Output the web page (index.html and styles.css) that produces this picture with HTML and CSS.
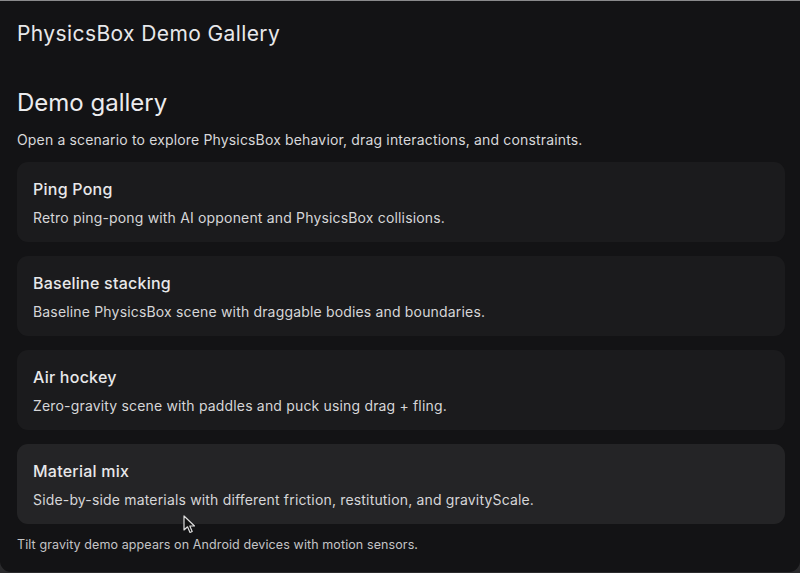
FILE: index.html
```html
<!DOCTYPE html>
<html>
<head>
<meta charset="utf-8">
<link rel="stylesheet" href="styles.css">
</head>
<body>
<div class="window">
  <header class="appbar">PhysicsBox Demo Gallery</header>
  <main class="content">
    <h1 class="heading">Demo gallery</h1>
    <p class="intro">Open a scenario to explore PhysicsBox behavior, drag interactions, and constraints.</p>
    <div class="list">
      <div class="card">
        <div class="card-title">Ping Pong</div>
        <div class="card-desc">Retro ping-pong with AI opponent and PhysicsBox collisions.</div>
      </div>
      <div class="card">
        <div class="card-title">Baseline stacking</div>
        <div class="card-desc">Baseline PhysicsBox scene with draggable bodies and boundaries.</div>
      </div>
      <div class="card">
        <div class="card-title">Air hockey</div>
        <div class="card-desc">Zero-gravity scene with paddles and puck using drag + fling.</div>
      </div>
      <div class="card card-hover">
        <div class="card-title">Material mix</div>
        <div class="card-desc">Side-by-side materials with different friction, restitution, and gravityScale.</div>
        <svg class="cursor" width="13" height="19" viewBox="0 0 13 19"><path d="M1 1 L1 15 L4.5 11.8 L7 17.5 L9.2 16.5 L6.8 11 L11.5 11 Z" fill="#111" stroke="#ddd" stroke-width="1.2" stroke-linejoin="round"/></svg>
      </div>
    </div>
    <p class="note">Tilt gravity demo appears on Android devices with motion sensors.</p>
  </main>
</div>
</body>
</html>
```
FILE: styles.css
```css
html, body {
  margin: 0;
  padding: 0;
  background: #2a2a2c;
  width: 800px;
  height: 573px;
  overflow: hidden;
}
body {
  font-family: Inter, "Open Sans", "Liberation Sans", sans-serif;
  color: #e6e6e8;
}
.window {
  width: 800px;
  height: 572px;
  background: #131315;
  border-top: 1px solid #8a8a8c;
  border-radius: 0 0 11px 11px;
  box-sizing: border-box;
  overflow: hidden;
}
.appbar {
  padding: 20px 17px 0;
  height: 52px;
  box-sizing: border-box;
  font-size: 21px;
  line-height: 26px;
  letter-spacing: 0.4px;
  color: #e8e8ea;
}
.content {
  padding: 34px 15px 0 17px;
}
.heading {
  margin: 0;
  font-size: 24px;
  font-weight: 400;
  line-height: 32px;
  color: #ececee;
}
.intro {
  margin: 12px 0 0;
  font-size: 14px;
  line-height: 18px;
  letter-spacing: 0.16px;
  color: #d8d8da;
}
.list {
  margin-top: 13px;
  display: flex;
  flex-direction: column;
  gap: 14px;
}
.card {
  position: relative;
  height: 80px;
  box-sizing: border-box;
  background: #1b1b1d;
  border-radius: 11px;
  padding: 17px 16px 0;
}
.card-hover {
  background: #242426;
}
.card-title {
  font-size: 16px;
  font-weight: 500;
  line-height: 20px;
  letter-spacing: 0.24px;
  color: #e8e8ea;
}
.card-desc {
  margin-top: 10px;
  font-size: 14px;
  line-height: 18px;
  letter-spacing: 0.17px;
  color: #d6d6d8;
}
.cursor {
  position: absolute;
  left: 166px;
  top: 71px;
}
.note {
  margin: 13px 0 0;
  font-size: 12.5px;
  line-height: 16px;
  letter-spacing: 0.1px;
  color: #c4c4c6;
}
```
